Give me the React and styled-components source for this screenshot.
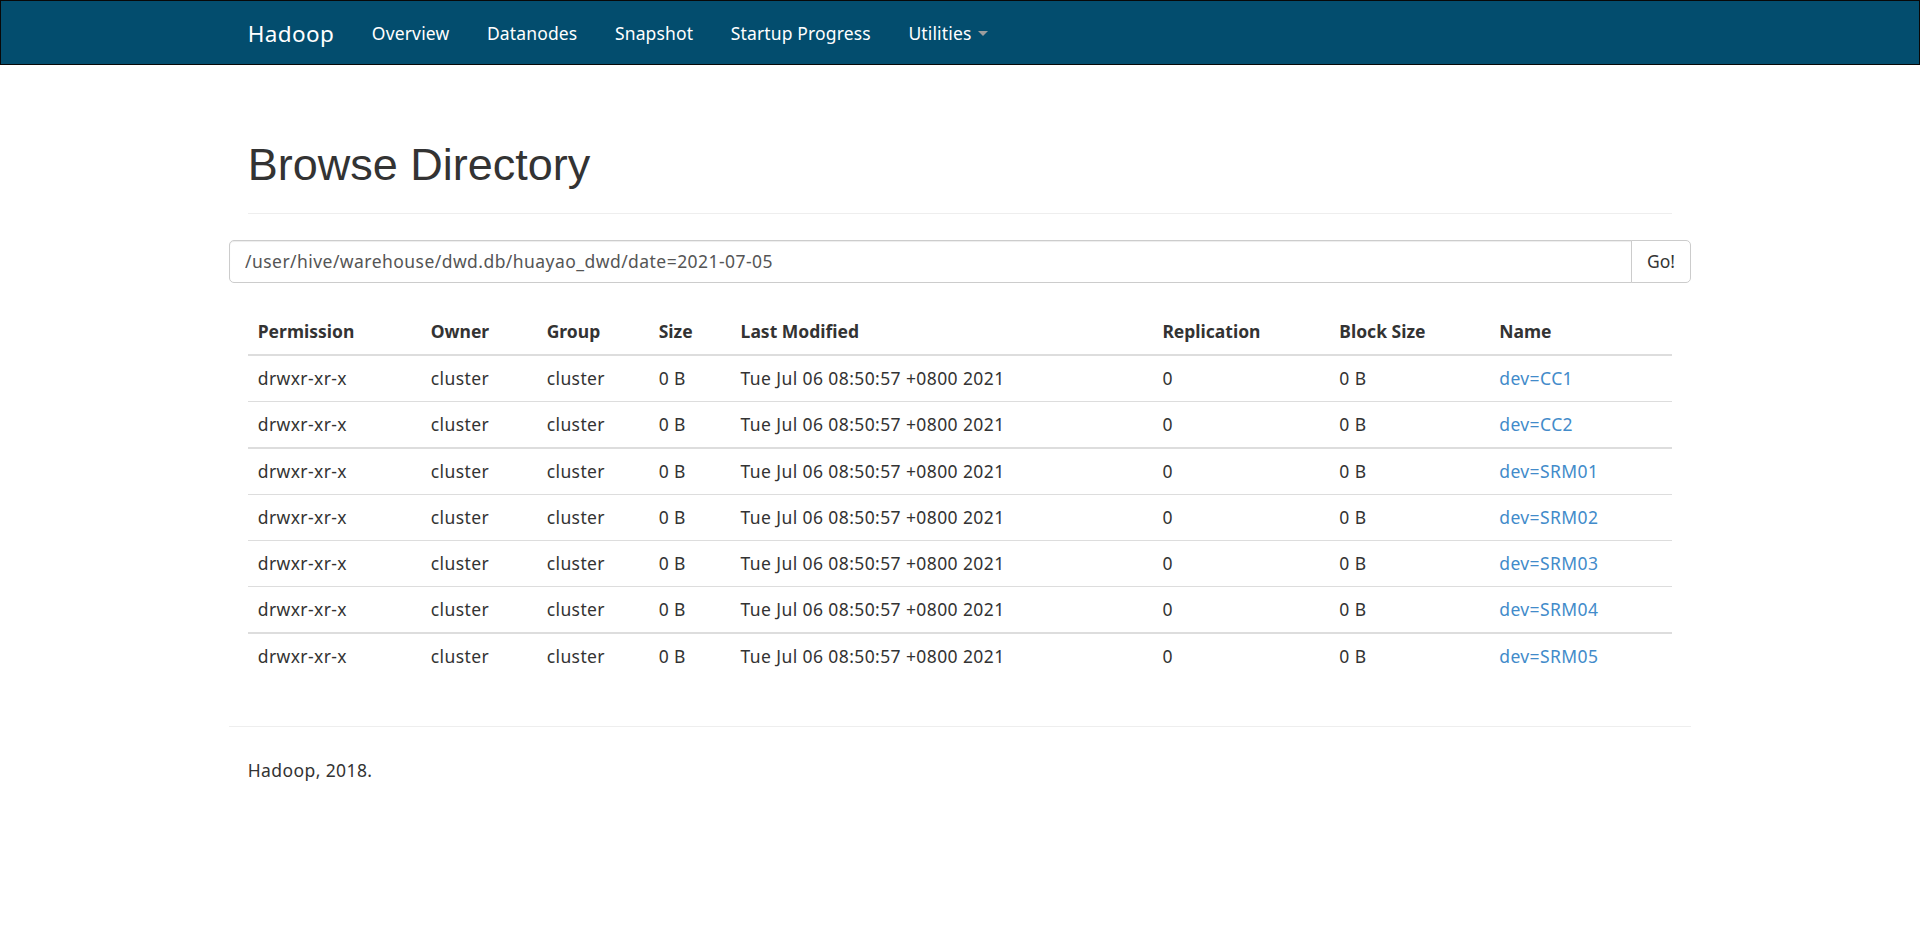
import React from "react";
import styled, { createGlobalStyle } from "styled-components";

const files = [
  { name: "dev=CC1" },
  { name: "dev=CC2" },
  { name: "dev=SRM01", thick: true },
  { name: "dev=SRM02" },
  { name: "dev=SRM03" },
  { name: "dev=SRM04" },
  { name: "dev=SRM05", thick: true },
];

const columns = [
  { label: "Permission", width: 173 },
  { label: "Owner", width: 116 },
  { label: "Group", width: 112 },
  { label: "Size", width: 82 },
  { label: "Last Modified", width: 422 },
  { label: "Replication", width: 177 },
  { label: "Block Size", width: 160 },
  { label: "Name", width: 183 },
];

const navItems = ["Overview", "Datanodes", "Snapshot", "Startup Progress"];

function App() {
  return (
    <>
      <GlobalStyle />
      <Navbar>
        <NavInner>
          <Brand href="#">Hadoop</Brand>
          <NavList>
            {navItems.map((item) => (
              <NavLink key={item} href="#">
                {item}
              </NavLink>
            ))}
            <NavLink href="#">
              Utilities <Caret />
            </NavLink>
          </NavList>
        </NavInner>
      </Navbar>

      <Container>
        <PageHeader>
          <h1>Browse Directory</h1>
        </PageHeader>

        <InputGroup>
          <PathInput
            type="text"
            defaultValue="/user/hive/warehouse/dwd.db/huayao_dwd/date=2021-07-05"
          />
          <GoButton>Go!</GoButton>
        </InputGroup>

        <Table>
          <thead>
            <tr>
              {columns.map((c) => (
                <Th key={c.label} style={{ width: c.width }}>
                  {c.label}
                </Th>
              ))}
            </tr>
          </thead>
          <tbody>
            {files.map((f) => (
              <Row key={f.name} thick={f.thick ? 1 : 0}>
                <td>drwxr-xr-x</td>
                <td>cluster</td>
                <td>cluster</td>
                <td>0 B</td>
                <td>Tue Jul 06 08:50:57 +0800 2021</td>
                <td>0</td>
                <td>0 B</td>
                <td>
                  <FileLink href="#">{f.name}</FileLink>
                </td>
              </Row>
            ))}
          </tbody>
        </Table>

        <Divider />
        <Footer>Hadoop, 2018.</Footer>
      </Container>
    </>
  );
}

const GlobalStyle = createGlobalStyle`
  body {
    margin: 0;
    background: #fff;
    color: #333;
    font-family: "Noto Sans", "Open Sans", sans-serif;
    font-size: 17.5px;
    line-height: 25px;
    letter-spacing: 0.4px;
  }
  * { box-sizing: border-box; }
`;

const Navbar = styled.nav`
  background: #034d6e;
  border: 1px solid #080808;
  height: 65px;
`;

const NavInner = styled.div`
  width: 1462px;
  margin: 0 auto;
  padding: 2px 18.75px 0;
  display: flex;
  align-items: center;
  height: 100%;
`;

const Brand = styled.a`
  color: #fff;
  font-size: 22.5px;
  line-height: 25px;
  padding: 0 18.75px 0 0;
  text-decoration: none;
`;

const NavList = styled.div`
  display: flex;
  align-items: center;
`;

const NavLink = styled.a`
  color: #fff;
  text-decoration: none;
  padding: 0 18.75px;
  line-height: 25px;
  letter-spacing: 0.15px;
  display: flex;
  align-items: center;
`;

const Caret = styled.span`
  display: inline-block;
  width: 0;
  height: 0;
  margin-left: 7px;
  border-top: 5px solid #9d9d9d;
  border-left: 5px solid transparent;
  border-right: 5px solid transparent;
`;

const Container = styled.div`
  width: 1462px;
  margin: 0 auto;
  padding: 0 18.75px;
`;

const PageHeader = styled.div`
  margin-top: 75px;
  padding-bottom: 11px;
  border-bottom: 1px solid #eee;
  margin-bottom: 26px;

  h1 {
    margin: 0 0 12.5px;
    font-family: "Liberation Sans", Arial, sans-serif;
    font-size: 45px;
    line-height: 49.5px;
    font-weight: 400;
    letter-spacing: 0;
    color: #333;
  }
`;

const InputGroup = styled.div`
  display: flex;
  margin: 0 -18.75px;
  height: 42.5px;
`;

const PathInput = styled.input`
  flex: 1;
  height: 100%;
  padding: 0 15px;
  font-family: "Noto Sans", "Open Sans", sans-serif;
  font-size: 17.5px;
  letter-spacing: 0.45px;
  color: #555;
  border: 1px solid #ccc;
  border-radius: 5px 0 0 5px;
  box-shadow: inset 0 1px 1px rgba(0, 0, 0, 0.075);
  outline: none;
`;

const GoButton = styled.button`
  height: 100%;
  width: 60px;
  margin-left: -1px;
  background: #fff;
  border: 1px solid #ccc;
  border-radius: 0 5px 5px 0;
  font-family: "Noto Sans", "Open Sans", sans-serif;
  font-size: 17.5px;
  color: #333;
  cursor: pointer;
`;

const Table = styled.table`
  width: 100%;
  margin-top: 26px;
  border-collapse: collapse;
  border-spacing: 0;

  td {
    padding: 10px;
    line-height: 25px;
    border-top: 1px solid #ddd;
    text-align: left;
    vertical-align: top;
  }
`;

const Th = styled.th`
  padding: 10px;
  line-height: 25px;
  text-align: left;
  font-weight: 700;
  letter-spacing: 0;
  border-bottom: 2.5px solid #ddd;
`;

const Row = styled.tr`
  td {
    border-top-width: ${(p) => (p.thick ? "2px" : "1px")};
  }
  &:first-child td {
    border-top: 0;
  }
`;

const FileLink = styled.a`
  color: #428bca;
  text-decoration: none;
`;

const Divider = styled.hr`
  margin: 47px -18.75px 31px;
  border: 0;
  border-top: 1px solid #eee;
`;

const Footer = styled.p`
  margin: 0;
`;

export default App;
